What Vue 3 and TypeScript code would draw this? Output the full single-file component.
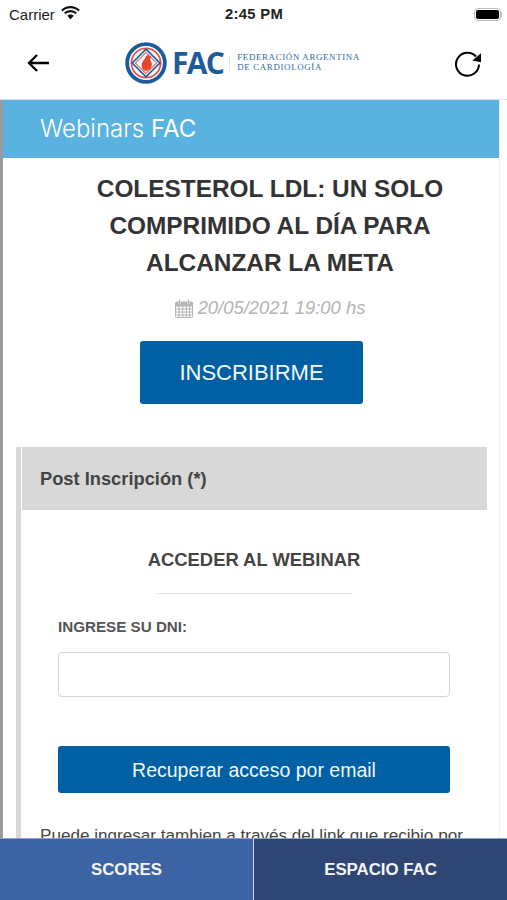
<script setup lang="ts">
import { ref } from 'vue'

const dni = ref('')
</script>

<template>
  <div class="screen">
    <div class="status-bar">
      <div class="status-left">
        <span>Carrier</span>
        <svg class="wifi" width="19" height="14" viewBox="0 0 19 14">
          <path d="M9.5 2.2c3 0 5.8 1.2 7.9 3.2l1.4-1.6C16.3 1.4 13 0 9.5 0S2.700 1.400.2 3.800l1.400 1.600c2.100-2 4.900-3.200 7.900-3.200z" fill="#111" />
          <path d="M9.500 6.300c1.900 0 3.600.7 4.900 1.900l1.500-1.600c-1.700-1.600-4-2.500-6.400-2.500s-4.700.9-6.400 2.500l1.500 1.600c1.300-1.200 3-1.900 4.900-1.900z" fill="#111" />
          <path d="M9.500 8.500c-1.200 0-2.400.5-3.200 1.300l3.200 3.700 3.200-3.700c-.8-.8-2-1.300-3.200-1.300z" fill="#111" />
        </svg>
      </div>
      <span class="status-time">2:45 PM</span>
      <div class="battery">
        <div class="battery-body"><div class="battery-level"></div></div>
        <div class="battery-tip"></div>
      </div>
    </div>

    <header class="nav">
      <svg class="nav-icon" width="26" height="22" viewBox="0 0 26 22">
        <path d="M24 11H4M12 3 4 11l8 8" fill="none" stroke="#000" stroke-width="2.300" />
      </svg>
      <div class="logo">
        <svg width="42" height="42" viewBox="0 0 44 44">
          <circle cx="22" cy="22" r="19.700" fill="#fff" stroke="#1d5c9c" stroke-width="4" />
          <circle cx="22" cy="22" r="15.300" fill="#fff" stroke="#e2524a" stroke-width="1.800" />
          <path d="M22 7.500 36.500 22 22 36.500 7.500 22z" fill="#fff" stroke="#1d5c9c" stroke-width="1.700" />
          <path d="M22 10.800 33.200 22 22 33.200 10.800 22z" fill="#fff" stroke="#e0736c" stroke-width="1.200" />
          <path transform="translate(22 22) scale(1.250) translate(-21.500 -21)" d="M22.500 14c1 .8 2.300.5 3 1.500.2 1-.6 1.500-.6 2.500 1.300 2 2 4 1.200 6.200-.8 2.200-3 3.800-5 3.300-2.300-.5-3.600-3-3.200-5.500.3-2.300 2-3.500 2.800-5 .5-1 .8-2 1.800-2.500z" fill="#e8452f" />
        </svg>
        <span class="logo-fac">FAC</span>
        <span class="logo-rule"></span>
        <span class="logo-name">FEDERACIÓN ARGENTINA<br />DE CARDIOLOGÍA</span>
      </div>
      <svg class="nav-icon" width="28" height="28" viewBox="0 0 28 28">
        <path d="M22 7.500A11.500 11.500 0 1 0 25 15.500" fill="none" stroke="#000" stroke-width="2" />
        <path d="M18.300 11.500 27 4.200V13.200z" fill="#000" />
      </svg>
    </header>

    <main class="page">
      <div class="banner"><span class="banner-light">Webinars</span> <span class="banner-strong">FAC</span></div>

      <h1 class="title">COLESTEROL LDL: UN SOLO COMPRIMIDO AL DÍA PARA ALCANZAR LA META</h1>

      <div class="date">
        <svg width="18" height="19" viewBox="0 0 18 19">
          <path d="M1.500 3h15a1 1 0 0 1 1 1v13.500a1 1 0 0 1-1 1h-15a1 1 0 0 1-1-1V4a1 1 0 0 1 1-1z" fill="none" stroke="#b4b4b4" stroke-width="1" />
          <path d="M.5 7h17M.5 10h17M.5 13h17M.5 16h17M4 7v11M7.700 7v11M11.300 7v11M14.500 7v11" fill="none" stroke="#b4b4b4" stroke-width="1" />
          <rect x="0.500" y="3" width="17" height="4" fill="#b4b4b4" />
          <rect x="3.500" y="0.500" width="2" height="4.500" rx="1" fill="#b4b4b4" stroke="#fff" stroke-width=".5" />
          <rect x="12.500" y="0.500" width="2" height="4.500" rx="1" fill="#b4b4b4" stroke="#fff" stroke-width=".5" />
        </svg>
        <span>20/05/2021 19:00 hs</span>
      </div>

      <button class="btn-signup" type="button">INSCRIBIRME</button>

      <section class="panel">
        <div class="panel-head">Post Inscripción (*)</div>
        <div class="panel-body">
          <h2 class="access-title">ACCEDER AL WEBINAR</h2>
          <hr class="access-rule" />
          <label class="field">
            <span class="field-label">INGRESE SU DNI:</span>
            <input v-model="dni" class="field-input" type="text" />
          </label>
          <button class="btn-recover" type="button">Recuperar acceso por email</button>
          <p class="note">Puede ingresar tambien a través del link que recibio por</p>
        </div>
      </section>
    </main>

    <footer class="tabs">
      <div class="tab tab-scores">SCORES</div>
      <div class="tab tab-space">ESPACIO FAC</div>
    </footer>
  </div>
</template>

<style>
html,
body {
  margin: 0;
  background: #fff;
}
</style>

<style scoped>
.screen {
  position: relative;
  display: flex;
  flex-direction: column;
  width: 507px;
  height: 900px;
  overflow: hidden;
  background: #fff;
  font-family: 'Liberation Sans', Arial, sans-serif;
}

.status-bar {
  display: flex;
  align-items: center;
  justify-content: space-between;
  height: 28px;
  padding: 0 5px 0 9px;
  font-size: 15px;
  color: #222;
  position: relative;
}

.status-left {
  display: flex;
  align-items: center;
  gap: 6px;
}

.wifi {
  margin-top: -3px;
}

.status-time {
  position: absolute;
  left: 225px;
  font-weight: 700;
  font-size: 14.800px;
  letter-spacing: 0.3px;
}

.battery {
  display: flex;
  align-items: center;
}

.battery-body {
  width: 27px;
  height: 13px;
  box-sizing: border-box;
  border: 1.500px solid #bbb;
  border-radius: 4px;
  padding: 1px;
}

.battery-level {
  height: 100%;
  background: #000;
  border-radius: 2px;
}

.battery-tip {
  width: 1.500px;
  height: 5px;
  background: #bbb;
}

.nav {
  display: flex;
  align-items: center;
  justify-content: space-between;
  height: 72px;
  padding: 0 25px 2px 25px;
  box-sizing: border-box;
  border-bottom: 1px solid #e4e4e4;
}

.logo {
  display: flex;
  align-items: center;
  margin-right: 20px;
  color: #1d5c9c;
}

.logo-fac {
  margin-left: 5px;
  font-family: 'Open Sans', sans-serif;
  font-size: 30px;
  font-weight: 700;
  letter-spacing: -1.700px;
  line-height: 1;
}

.logo-rule {
  width: 1px;
  height: 16px;
  margin: 0 7px 0 6px;
  background: #dfe6ee;
}

.logo-name {
  font-family: 'Liberation Serif', serif;
  font-size: 8.900px;
  line-height: 9.500px;
  letter-spacing: 0.650px;
  color: #2f6aa5;
}

.page {
  flex: 1;
  min-height: 0;
  overflow: hidden;
  box-sizing: border-box;
  margin-right: 7px;
  border-left: 3px solid #9a9a9a;
  border-right: 1px solid #f0f0f0;
}

.banner {
  height: 58px;
  line-height: 58px;
  padding-left: 37px;
  background: #5ab2e0;
  color: #fff;
  font-size: 24px;
}

.banner-light {
  font-family: Inter, 'Liberation Sans', sans-serif;
  font-weight: 300;
}

.banner-strong {
  font-family: Inter, 'Liberation Sans', sans-serif;
  font-weight: 400;
}

.title {
  margin: 12px 29px 0 67px;
  color: #333;
  font-size: 24.400px;
  line-height: 37px;
  font-weight: 700;
  text-align: center;
}

.date {
  display: flex;
  align-items: center;
  justify-content: center;
  gap: 5px;
  margin: 15px 29px 0 67px;
  height: 24px;
  color: #b4b4b4;
  font-size: 18.400px;
  font-style: italic;
}

.btn-signup {
  display: block;
  width: 223px;
  height: 63px;
  margin: 21px 0 0 137px;
  border: 0;
  border-radius: 3px;
  background: #0060a3;
  color: #f2f8fc;
  font-family: inherit;
  font-size: 22px;
}

.panel {
  margin: 43px 12px 0 13px;
  border-left: 5px solid #d8d8d8;
}

.panel-head {
  height: 63px;
  line-height: 63px;
  margin-left: 1px;
  padding-left: 18px;
  background: #d8d8d8;
  color: #444;
  font-size: 18.300px;
  font-weight: 700;
}

.panel-body {
  padding: 0 37px;
}

.access-title {
  margin: 0;
  padding-top: 39px;
  color: #444;
  font-size: 18.400px;
  line-height: 22px;
  font-weight: 700;
  text-align: center;
}

.access-rule {
  width: 196px;
  height: 1px;
  margin: 22px auto 0;
  border: 0;
  background: #e4e4e4;
}

.field {
  display: block;
  margin-top: 24px;
}

.field-label {
  display: block;
  color: #555;
  font-size: 15.200px;
  font-weight: 700;
  line-height: 18px;
}

.field-input {
  display: block;
  width: 100%;
  height: 45px;
  margin-top: 16px;
  box-sizing: border-box;
  border: 1px solid #d4d4d4;
  border-radius: 4px;
  background: #fff;
}

.btn-recover {
  display: block;
  width: 100%;
  height: 47px;
  margin-top: 49px;
  padding-top: 2px;
  border: 0;
  border-radius: 3px;
  background: #0060a3;
  color: #f2f8fc;
  font-family: inherit;
  font-size: 19.500px;
}

.note {
  margin: 31px -20px 0 -18px;
  color: #444;
  font-size: 17.100px;
  line-height: 24px;
  white-space: nowrap;
}

.tabs {
  display: flex;
  flex: none;
  height: 62px;
  color: #f4f6fa;
  font-size: 16.800px;
  font-weight: 700;
}

.tab {
  display: flex;
  align-items: center;
  justify-content: center;
  box-sizing: border-box;
  border-top: 1px solid #8ea3c4;
}

.tab-scores {
  width: 253px;
  background: #3c64a4;
}

.tab-space {
  flex: 1;
  background: #2f4675;
  border-left: 1px solid #cfd6e2;
}
</style>
